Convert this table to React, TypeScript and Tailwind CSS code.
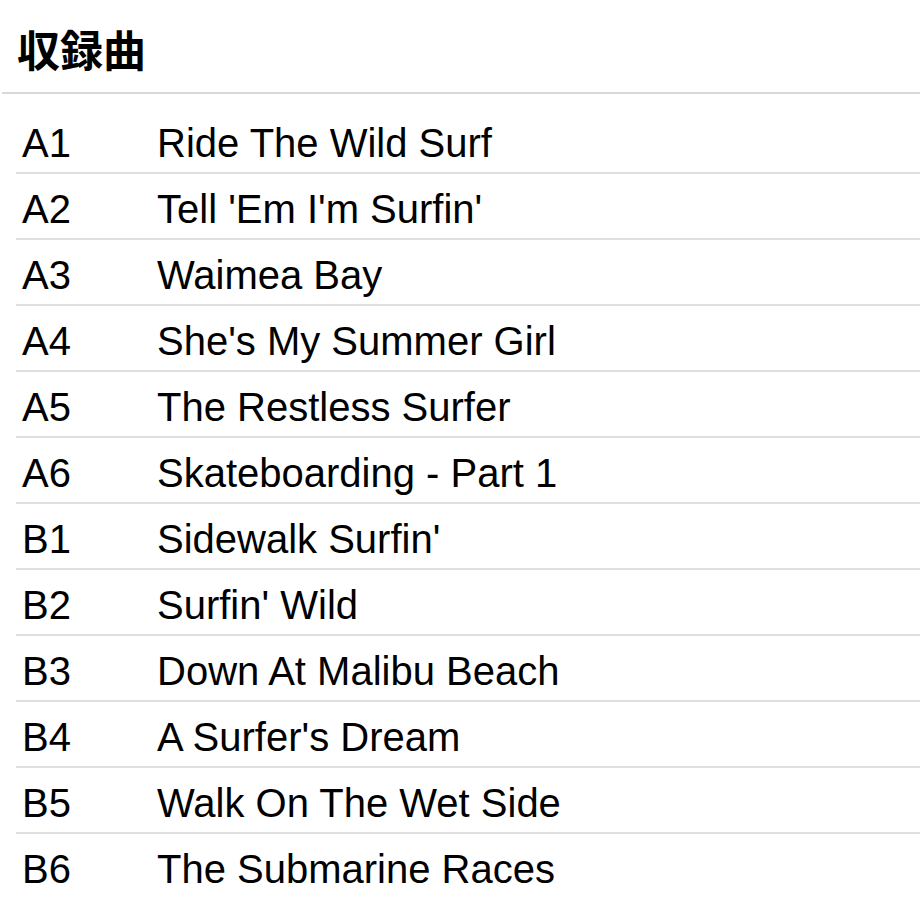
import React from 'react';

const tracks: [string, string][] = [
  ['A1', 'Ride The Wild Surf'],
  ['A2', "Tell 'Em I'm Surfin'"],
  ['A3', 'Waimea Bay'],
  ['A4', "She's My Summer Girl"],
  ['A5', 'The Restless Surfer'],
  ['A6', 'Skateboarding - Part 1'],
  ['B1', "Sidewalk Surfin'"],
  ['B2', "Surfin' Wild"],
  ['B3', 'Down At Malibu Beach'],
  ['B4', "A Surfer's Dream"],
  ['B5', 'Walk On The Wet Side'],
  ['B6', 'The Submarine Races'],
];

export default function App() {
  return (
    <div className="w-[920px] h-[920px] overflow-hidden bg-white text-black">
      <div className="ml-[2px] pl-[15px] pt-[27px] pb-[22px] border-b-2 border-[#d9d9d9]">
        <h2 className="text-[43px] leading-[43px] font-bold font-['Noto_Sans_CJK_JP',sans-serif]">収録曲</h2>
      </div>
      <ul className="mt-[14px] ml-[16px] font-['Liberation_Sans',Arial,sans-serif] text-[40px] leading-[46px]">
        {tracks.map(([pos, title], i) => (
          <li
            key={pos}
            className={`flex pl-[6px] pt-[12px] pb-[6px] ${i < tracks.length - 1 ? 'border-b-2 border-[#dfdfdf]' : ''}`}
          >
            <span className="w-[135px] shrink-0">{pos}</span>
            <span className="whitespace-nowrap">{title}</span>
          </li>
        ))}
      </ul>
    </div>
  );
}
